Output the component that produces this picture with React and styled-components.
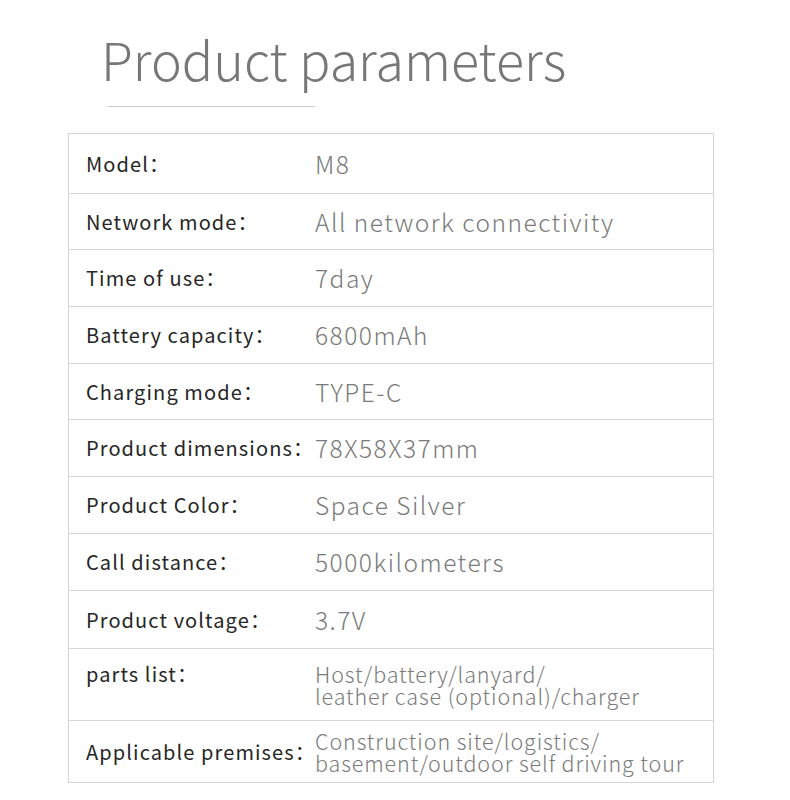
import React from "react";
import styled, { createGlobalStyle } from "styled-components";

const GlobalStyle = createGlobalStyle`
  body {
    margin: 0;
    background: #ffffff;
    font-family: "Noto Sans CJK SC", "Noto Sans", sans-serif;
  }
`;

const Page = styled.div`
  width: 790px;
  height: 800px;
  padding-top: 25px;
  box-sizing: border-box;
`;

const Title = styled.h1`
  margin: 0 0 0 101px;
  font-size: 52px;
  line-height: 68px;
  font-weight: 300;
  color: #777777;
`;

const Rule = styled.div`
  margin: 13px 0 0 107px;
  width: 208px;
  height: 1px;
  background: #cfcfcf;
`;

const Table = styled.div`
  margin: 26px 0 0 68px;
  width: 646px;
  border: 1px solid #d6d6d6;
  box-sizing: border-box;
`;

const Row = styled.div`
  display: grid;
  grid-template-columns: 246px 1fr;
  align-items: center;
  height: ${(p) => p.$h}px;
  box-sizing: border-box;
  border-top: ${(p) => (p.$first ? "none" : "1px solid #d6d6d6")};
`;

const Label = styled.div`
  align-self: ${(p) => (p.$top ? "start" : "center")};
  margin-top: ${(p) => (p.$top ? "11px" : "0")};
  padding-left: 17px;
  font-size: 20px;
  line-height: 28px;
  font-weight: 400;
  color: #262626;
  letter-spacing: 1.1px;
  white-space: nowrap;
`;

const Value = styled.div`
  font-size: ${(p) => (p.$small ? 21.5 : 24.5)}px;
  line-height: ${(p) => (p.$small ? 22 : 30)}px;
  font-weight: 300;
  color: #7a7a7a;
  letter-spacing: ${(p) => (p.$small ? 0.9 : 1.5)}px;
  white-space: nowrap;
`;

const rows = [
  ["Model", ["M8"], 59],
  ["Network mode", ["All network connectivity"], 56],
  ["Time of use", ["7day"], 57],
  ["Battery capacity", ["6800mAh"], 57],
  ["Charging mode", ["TYPE-C"], 56],
  ["Product dimensions", ["78X58X37mm"], 57],
  ["Product Color", ["Space Silver"], 57],
  ["Call distance", ["5000kilometers"], 57],
  ["Product voltage", ["3.7V"], 58],
  ["parts list", ["Host/battery/lanyard/", "leather case (optional)/charger"], 72, true],
  ["Applicable premises", ["Construction site/logistics/", "basement/outdoor self driving tour"], 62],
];

export default function App() {
  return (
    <Page>
      <GlobalStyle />
      <Title>Product parameters</Title>
      <Rule />
      <Table>
        {rows.map(([label, value, h, top], i) => (
          <Row key={label} $h={h} $first={i === 0}>
            <Label $top={top}>{label}：</Label>
            <Value $small={value.length > 1}>
              {value.map((line) => (
                <div key={line}>{line}</div>
              ))}
            </Value>
          </Row>
        ))}
      </Table>
    </Page>
  );
}
